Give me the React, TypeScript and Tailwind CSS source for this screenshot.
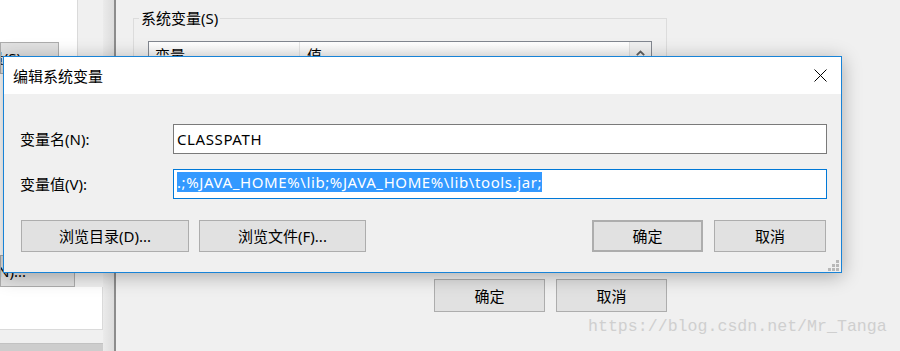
import React from 'react';

const ui = "font-['Noto_Sans','Noto_Sans_CJK_SC',sans-serif]";

function WinButton({ children, className = '' }: { children: React.ReactNode; className?: string }) {
  return (
    <div
      className={`flex items-center justify-center bg-[#e1e1e1] border border-[#adadad] text-[15px] leading-[20px] text-black ${className}`}
    >
      {children}
    </div>
  );
}

function CloseIcon() {
  return (
    <svg width="13" height="13" viewBox="0 0 13 13" className="block">
      <path d="M0.5 0.5 L12.5 12.5 M12.5 0.5 L0.5 12.5" stroke="#000" strokeWidth="1" fill="none" />
    </svg>
  );
}

function Grip() {
  const dots = [
    [8, 0],
    [4, 4],
    [8, 4],
    [0, 8],
    [4, 8],
    [8, 8],
  ];
  return (
    <svg width="11" height="11" viewBox="0 0 11 11" className="block">
      {dots.map(([x, y]) => (
        <rect key={`${x}-${y}`} x={x} y={y} width="3" height="3" fill="#b8b8b8" />
      ))}
    </svg>
  );
}

// dialog: 编辑系统变量
function EditDialog() {
  return (
    <div className="absolute left-[3px] top-[56px] w-[839px] h-[217px] flex flex-col border border-[#1883d7] bg-[#f0f0f0] shadow-[0_3px_18px_rgba(0,0,0,0.3)]">
      <div className="h-[37px] bg-white flex items-center justify-between pl-[9px] pr-[14px]">
        <span className="text-[15px] leading-[20px] text-black">编辑系统变量</span>
        <CloseIcon />
      </div>

      <div className="flex-1 pt-[30px] pl-[16px] pr-[14px] pb-[20px] flex flex-col">
        <div className="flex items-center h-[30px]">
          <div className="w-[153px] text-[15px] leading-[20px] text-black">变量名(N):</div>
          <div className="w-[654px] h-[30px] bg-white border border-[#7a7a7a] flex items-center pl-[3px] text-[15px] leading-[20px] tracking-[0.6px] text-black">
            CLASSPATH
          </div>
        </div>

        <div className="flex items-center h-[30px] mt-[15px]">
          <div className="w-[153px] text-[15px] leading-[20px] text-black">变量值(V):</div>
          <div className="w-[654px] h-[30px] bg-white border border-[#0078d7] flex items-start pt-[2px] pl-[3px] text-[15px] leading-[20px] tracking-[0.6px]">
            <span className="bg-[#3399ff] text-white whitespace-pre">.;%JAVA_HOME%\lib;%JAVA_HOME%\lib\tools.jar;</span>
          </div>
        </div>

        <div className="flex mt-[21px] pl-[1px] pr-[1px]">
          <WinButton className="w-[168px] h-[32px]">浏览目录(D)...</WinButton>
          <WinButton className="w-[167px] h-[32px] ml-[10px]">浏览文件(F)...</WinButton>
          <div className="flex-1" />
          <WinButton className="w-[111px] h-[32px] border-2 border-[#0078d7]">确定</WinButton>
          <WinButton className="w-[112px] h-[32px] ml-[11px]">取消</WinButton>
        </div>
      </div>

      <div className="absolute right-[2px] bottom-[1px]">
        <Grip />
      </div>
    </div>
  );
}

export default function App() {
  return (
    <div className={`relative w-[900px] h-[351px] overflow-hidden bg-[#f0f0f0] ${ui}`}>
      <div className="flex h-full">
        {/* left window strip */}
        <div className="w-[103px] flex flex-col">
          <div className="flex h-[255px]">
            <div className="w-[77px] bg-white flex flex-col">
              <div className="h-[42px]" />
              <WinButton className="w-[59px] h-[32px] justify-end! pr-[37px] overflow-hidden whitespace-nowrap">
                变量(S)
              </WinButton>
            </div>
            <div className="w-[1px] bg-[#dadada]" />
            <div className="flex-1 bg-[#f0f0f0]" />
          </div>
          <WinButton className="w-[75px] h-[32px] justify-end! pr-[48px] overflow-hidden whitespace-nowrap">
            编辑(N)...
          </WinButton>
          <div className="h-[43px] bg-white border-r border-b border-[#dadada]" />
          <div className="h-[13px]" />
          <div className="h-[8px] w-[105px] bg-[#cdcdcd] border-t border-[#c2c2c2]" />
        </div>
        <div className="w-[13px] bg-gradient-to-r from-[#ebebeb] to-[#dcdcdc] border-r-2 border-[#8c8c8c]" />

        {/* system variables pane */}
        <div className="flex-1">
          <div className="w-[534px] ml-[17px] mt-[8px] flex flex-col">
            <fieldset className="h-[258px] border border-[#dcdcdc] pl-[14px]">
              <legend className="ml-[-9px] px-[2px] text-[15px] leading-[20px] text-black">系统变量(S)</legend>
              <div className="mt-[13px] w-[504px] h-[190px] bg-white border border-[#828790] flex">
                <div className="flex-1 flex flex-col">
                  <div className="h-[24px] flex bg-gradient-to-b from-white to-[#efefef] border-b border-[#e5e5e5] text-[15px] leading-[20px] text-black">
                    <div className="w-[151px] pl-[6px] pt-[3px] border-r border-[#e5e5e5]">变量</div>
                    <div className="pl-[7px] pt-[3px]">值</div>
                  </div>
                </div>
                <div className="w-[22px] bg-[#f0f0f0] border-l border-[#e0e0e0] flex flex-col">
                  <div className="h-[22px] flex items-center justify-center">
                    <svg width="9" height="6" viewBox="0 0 9 6" className="block">
                      <path d="M0.8 5.2 L4.5 1.5 L8.2 5.2" stroke="#606060" strokeWidth="1.8" fill="none" />
                    </svg>
                  </div>
                </div>
              </div>
            </fieldset>
            <div className="flex justify-end mt-[13px] gap-[11px]">
              <WinButton className="w-[111px] h-[33px]">确定</WinButton>
              <WinButton className="w-[111px] h-[33px]">取消</WinButton>
            </div>
          </div>
        </div>
      </div>

      <EditDialog />

      <div className="absolute left-[588px] top-[316px] font-['Liberation_Mono',monospace] text-[16.6px] leading-[22px] text-[#cfcfcf]">
        https://blog.csdn.net/Mr_Tanga
      </div>
    </div>
  );
}
